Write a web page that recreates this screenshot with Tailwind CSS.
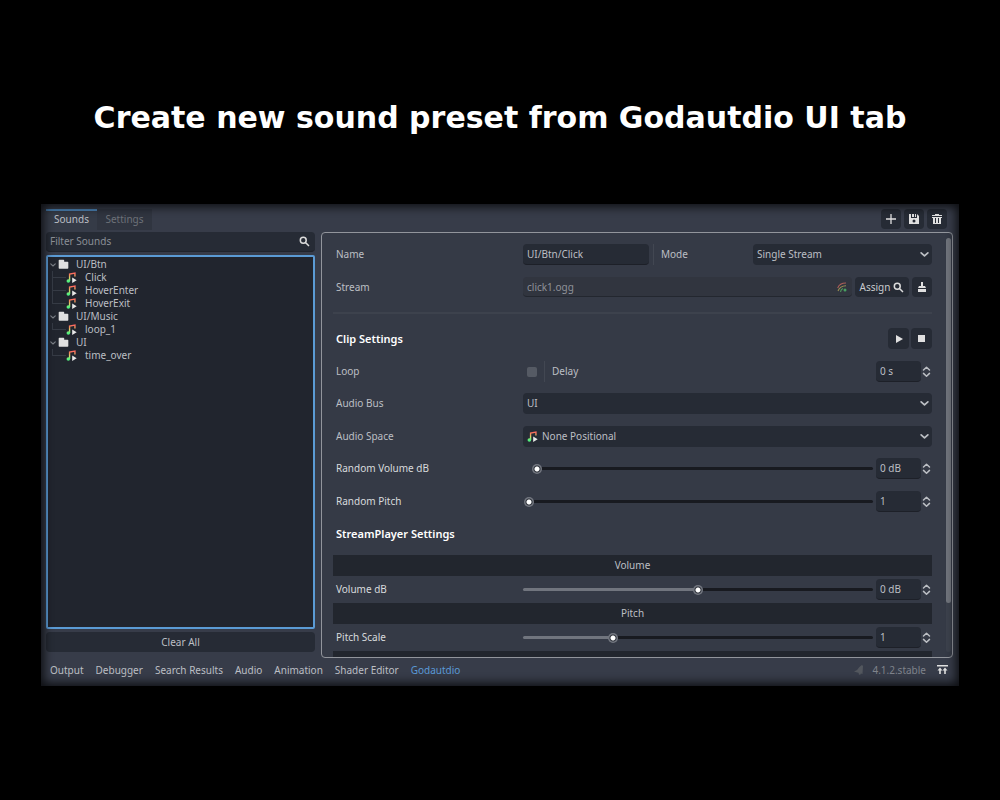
<!DOCTYPE html>
<html lang="en">
<head>
<meta charset="utf-8">
<title>Godautdio</title>
<script src="https://cdn.jsdelivr.net/npm/@tailwindcss/browser@4"></script>
</head>
<body class="bg-black min-h-screen font-['Noto_Sans',sans-serif] text-[10px] leading-[13px] text-[#bcbfc4]">
<svg class="absolute size-0" aria-hidden="true">
  <defs>
    <linearGradient id="tune" gradientUnits="userSpaceOnUse" x1="0" y1="1" x2="0" y2="15"><stop offset="0" stop-color="#ff5f5f"/><stop offset=".3" stop-color="#f0955c"/><stop offset=".55" stop-color="#d5dc6e"/><stop offset=".85" stop-color="#52f07f"/></linearGradient>
    <symbol id="note" viewBox="0 0 16 16"><path fill="none" stroke="url(#tune)" stroke-width="2" d="M5.200 13V3L13 1.600V6.500"/><circle cx="3.400" cy="13" r="2.600" fill="url(#tune)"/><path fill="#e8e8e8" d="M9 8v8l6.500-4z"/></symbol>
    <symbol id="folder" viewBox="0 0 16 16"><path fill="#e0e0e0" d="M1 2a1 1 0 0 1 1-1h6a1 1 0 0 1 1 1v2h5a1 1 0 0 1 1 1v8a1 1 0 0 1-1 1H2a1 1 0 0 1-1-1z"/></symbol>
    <symbol id="search" viewBox="0 0 16 16"><path fill="none" stroke="currentColor" stroke-width="2.200" d="M9.500 9.500 14.500 14.500M10.500 6.200a4.300 4.300 0 1 1-8.600 0 4.300 4.300 0 0 1 8.600 0z"/></symbol>
    <symbol id="chev" viewBox="0 0 8 8"><path fill="none" stroke="currentColor" stroke-width="1.500" stroke-linecap="round" stroke-linejoin="round" d="M1 2.500 4 5.300 7 2.500"/></symbol>
    <symbol id="spin" viewBox="0 0 8 12"><path fill="none" stroke="currentColor" stroke-width="1.500" stroke-linecap="round" stroke-linejoin="round" d="M1 4 4 1.200 7 4M1 7.400 4 10.200 7 7.400"/></symbol>
  </defs>
</svg>

<h1 class="pt-[98px] h-[204px] text-center font-['DejaVu_Sans',sans-serif] font-bold text-[30px] leading-10 text-white whitespace-nowrap">Create new sound preset from Godautdio UI tab</h1>

<main class="relative mx-[41px] pt-[5px] pl-[5px] pr-[6px] h-[482px] flex flex-col bg-[#373c49]">
  <header class="flex h-[23px] pr-1.5">
    <nav class="flex h-[21px]">
      <button class="w-[51px] pb-0.5 border-t-2 border-[#4b82b4] bg-[#353b47]">Sounds</button>
      <button class="w-[55px] bg-[#303540] text-[#6d7178]">Settings</button>
    </nav>
    <div class="ml-auto flex gap-[3px] text-[#e0e0e0]">
      <button aria-label="Add" class="size-5 bg-[#262b35] rounded-sm flex items-center justify-center"><svg class="size-3" viewBox="0 0 12 12"><path stroke="currentColor" stroke-width="1.300" d="M6 1v10M1 6h10"/></svg></button>
      <button aria-label="Save" class="size-5 bg-[#262b35] rounded-sm flex items-center justify-center"><svg class="size-3" viewBox="0 0 12 12"><path fill="currentColor" fill-rule="evenodd" d="M1 1h2v4h6V1l2 2v8H1zM7 1h1v3H7zM4 1h2v3H4zM6 6.500A1.500 1.500 0 1 0 6 9.500 1.500 1.500 0 1 0 6 6.500z"/></svg></button>
      <button aria-label="Delete" class="size-5 bg-[#262b35] rounded-sm flex items-center justify-center"><svg class="size-3" viewBox="0 0 12 12"><path fill="currentColor" d="M4 1h4v1h3v1H1V2h3zM1 4h10v1H1zM2 5h8v6H2z"/><path stroke="#262b35" d="M4.500 5v5M7.500 5v5"/></svg></button>
    </div>
  </header>

  <div class="flex gap-[6px] h-[426px]">
    <section class="w-[269px] flex flex-col">
      <label class="flex h-[20px] mb-[3px] items-center bg-[#262b35] pl-1 pr-[5px] rounded-sm border-b border-[#20242c]">
        <input aria-label="Filter Sounds" placeholder="Filter Sounds" class="flex-1 min-w-0 outline-none placeholder:text-[#8b8f96]">
        <svg class="size-[11px] text-[#dcdcdc]"><use href="#search"/></svg>
      </label>
      <div class="flex-1 mb-[3px] border-2 border-[#5b9bd5] rounded-xs bg-[#21252e] pt-px">
        <ul>
          <li><div class="flex h-[13px] items-center pl-0.5"><svg class="size-[6px] mr-0.5 text-[#7b7f86]"><use href="#chev"/></svg><svg class="size-[11px] mr-[7px]"><use href="#folder"/></svg>UI/Btn</div>
            <ul class="ml-1 h-[33px] border-l border-[#363b45]">
              <li class="flex h-[13px] items-center"><i class="w-[13px] h-px bg-[#363b45]"></i><svg class="size-[11px] mr-[8px]"><use href="#note"/></svg>Click</li>
              <li class="flex h-[13px] items-center"><i class="w-[13px] h-px bg-[#363b45]"></i><svg class="size-[11px] mr-[8px]"><use href="#note"/></svg>HoverEnter</li>
              <li class="flex h-[13px] items-center"><i class="w-[13px] h-px bg-[#363b45]"></i><svg class="size-[11px] mr-[8px]"><use href="#note"/></svg>HoverExit</li>
            </ul></li>
          <li class="mt-[6px]"><div class="flex h-[13px] items-center pl-0.5"><svg class="size-[6px] mr-0.5 text-[#7b7f86]"><use href="#chev"/></svg><svg class="size-[11px] mr-[7px]"><use href="#folder"/></svg>UI/Music</div>
            <ul class="ml-1 h-[7px] border-l border-[#363b45]">
              <li class="flex h-[13px] items-center"><i class="w-[13px] h-px bg-[#363b45]"></i><svg class="size-[11px] mr-[8px]"><use href="#note"/></svg>loop_1</li>
            </ul></li>
          <li class="mt-[6px]"><div class="flex h-[13px] items-center pl-0.5"><svg class="size-[6px] mr-0.5 text-[#7b7f86]"><use href="#chev"/></svg><svg class="size-[11px] mr-[7px]"><use href="#folder"/></svg>UI</div>
            <ul class="ml-1 h-[7px] border-l border-[#363b45]">
              <li class="flex h-[13px] items-center"><i class="w-[13px] h-px bg-[#363b45]"></i><svg class="size-[11px] mr-[8px]"><use href="#note"/></svg>time_over</li>
            </ul></li>
        </ul>
      </div>
      <button class="h-[20px] mb-[6px] bg-[#262b35] rounded-sm">Clear All</button>
    </section>

    <section class="flex-1 min-w-0 flex border border-[#92959c] rounded-sm bg-[#353a46] overflow-hidden">
      <div class="flex-1 min-w-0 pl-[11px] pt-[11px]">
        <div class="flex h-[21px] items-center"><label for="name" class="w-[190px] pl-[3px]">Name</label>
          <div class="flex-1 flex h-full items-center">
            <input id="name" value="UI/Btn/Click" class="w-[126px] h-full px-1 bg-[#262b35] rounded-sm border-b border-[#1d2028] outline-none">
            <i class="w-px h-full ml-[4px] mr-[7px] bg-[#424752]"></i>
            <label for="mode" class="flex-1">Mode</label>
            <div class="relative w-[179px] h-full"><select id="mode" class="appearance-none w-full h-full px-1 bg-[#262b35] rounded-sm"><option>Single Stream</option></select><svg class="absolute right-[3px] top-[6px] size-[9px] pointer-events-none"><use href="#chev"/></svg></div>
          </div></div>
        <div class="flex h-[20px] mt-3 items-center"><label for="stream" class="w-[190px] pl-[3px]">Stream</label>
          <div class="flex-1 flex h-full gap-[3px]">
            <div class="flex-1 flex items-center bg-[#31353f] border-b border-[#23272f] rounded-sm pr-[5px]"><input id="stream" readonly value="click1.ogg" class="flex-1 min-w-0 h-full px-1 text-[#8f9299] outline-none">
              <svg class="size-[10px] opacity-60" viewBox="0 0 10 10" fill="none" stroke-width="1.100"><path stroke="#ff7a6a" d="M.7 6Q2.500 1 9 1"/><path stroke="#dfce60" d="M1 9Q3 4 9 3.800"/><path stroke="#62df70" d="M3.500 9.800Q4 7 6 6.500"/><circle cx="8" cy="8" r="1.500" fill="#58e878"/></svg></div>
            <button class="w-[54px] bg-[#262b35] rounded-sm flex items-center justify-center gap-[3px] text-[#c8cacd]">Assign<svg class="size-[11px] text-[#dcdcdc]"><use href="#search"/></svg></button>
            <button aria-label="Clear stream" class="w-5 bg-[#262b35] rounded-sm flex items-center justify-center text-[#e0e0e0]"><svg class="size-[10px]" viewBox="0 0 10 10" fill="currentColor"><path d="M4 0h2v4h2l1 2H1l1-2h2zM1 7h8v3H1z"/></svg></button>
          </div></div>
        <hr class="mt-[15px] h-0.5 border-0 bg-[#3d424d]">
        <div class="flex h-[21px] mt-[14px] items-center text-[#e0e0e0]"><h2 class="flex-1 pl-[3px] text-[11px] font-semibold text-white">Clip Settings</h2>
          <button aria-label="Play" class="size-[21px] mr-[2px] bg-[#262b35] rounded-sm flex items-center justify-center"><svg class="size-2" viewBox="0 0 8 8"><path fill="currentColor" d="M1 0 8 4 1 8z"/></svg></button>
          <button aria-label="Stop" class="size-[21px] bg-[#262b35] rounded-sm flex items-center justify-center"><svg class="size-[7px]"><rect width="7" height="7" fill="currentColor"/></svg></button></div>
        <div class="flex h-[21px] mt-3 items-center"><label for="loop" class="w-[190px] pl-[3px]">Loop</label>
          <input id="loop" type="checkbox" class="appearance-none size-[10px] ml-1 rounded-xs bg-[#555a64]">
          <i class="w-px h-full ml-[7px] mr-[7px] bg-[#424752]"></i><label for="delay" class="flex-1">Delay</label>
          <input id="delay" value="0 s" class="w-[45px] h-full px-1 bg-[#262b35] rounded-sm border-b border-[#1d2028]"><svg class="w-[11px] h-3 px-px"><use href="#spin"/></svg></div>
        <div class="flex h-[21px] mt-[11px] items-center"><label for="bus" class="w-[190px] pl-[3px]">Audio Bus</label>
          <div class="relative flex-1 h-full"><select id="bus" class="appearance-none w-full h-full px-1 bg-[#262b35] rounded-sm"><option>UI</option></select><svg class="absolute right-[3px] top-[6px] size-[9px] pointer-events-none"><use href="#chev"/></svg></div></div>
        <div class="flex h-[21px] mt-3 items-center"><label for="space" class="w-[190px] pl-[3px]">Audio Space</label>
          <div class="relative flex-1 h-full"><select id="space" class="appearance-none w-full h-full pl-[19px] bg-[#262b35] rounded-sm"><option>None Positional</option></select><svg class="absolute left-1 top-[5px] size-[11px] pointer-events-none"><use href="#note"/></svg><svg class="absolute right-[3px] top-[6px] size-[9px] pointer-events-none"><use href="#chev"/></svg></div></div>
        <div class="flex h-[21px] mt-[11px] items-center text-[#d8dadd]"><label for="rvol" class="w-[190px] pl-[3px]">Random Volume dB</label>
          <input id="rvol" type="range" min="0" max="100" value="0" class="appearance-none flex-1 min-w-0 h-[3px] ml-[9px] mr-[3px] rounded-sm bg-[#181a20] [&::-webkit-slider-thumb]:appearance-none [&::-webkit-slider-thumb]:size-[10px] [&::-webkit-slider-thumb]:rounded-full [&::-webkit-slider-thumb]:bg-[radial-gradient(circle,#ffffff_2px,#2b2f38_3px,#2b2f38_3px,#737780_4px)]">
          <input aria-label="Random Volume value" value="0 dB" class="w-[45px] h-full px-1 text-[#bcbfc4] bg-[#262b35] rounded-sm border-b border-[#1d2028]"><svg class="w-[11px] h-3 px-px text-[#bcbfc4]"><use href="#spin"/></svg></div>
        <div class="flex h-[21px] mt-3 items-center text-[#d8dadd]"><label for="rpitch" class="w-[190px] pl-[3px]">Random Pitch</label>
          <input id="rpitch" type="range" min="0" max="100" value="0" class="appearance-none flex-1 min-w-0 h-[3px] ml-px mr-[3px] rounded-sm bg-[#181a20] [&::-webkit-slider-thumb]:appearance-none [&::-webkit-slider-thumb]:size-[10px] [&::-webkit-slider-thumb]:rounded-full [&::-webkit-slider-thumb]:bg-[radial-gradient(circle,#ffffff_2px,#2b2f38_3px,#2b2f38_3px,#737780_4px)]">
          <input aria-label="Random Pitch value" value="1" class="w-[45px] h-full px-1 text-[#bcbfc4] bg-[#262b35] rounded-sm border-b border-[#1d2028]"><svg class="w-[11px] h-3 px-px text-[#bcbfc4]"><use href="#spin"/></svg></div>
        <h2 class="pl-[3px] text-[11px] leading-[44px] h-[43px] font-semibold text-white">StreamPlayer Settings</h2>
        <h3 class="h-[21px] leading-[21px] text-center bg-[#22262e]">Volume</h3>
        <div class="flex h-[21px] mt-[3px] items-center text-[#d8dadd]"><label for="vol" class="w-[190px] pl-[3px]">Volume dB</label>
          <input id="vol" type="range" min="0" max="100" value="50" style="--fill:50%" class="appearance-none flex-1 min-w-0 h-[3px] mr-[3px] rounded-sm bg-[linear-gradient(90deg,#71757e_var(--fill),#181a20_var(--fill))] [&::-webkit-slider-thumb]:appearance-none [&::-webkit-slider-thumb]:size-[10px] [&::-webkit-slider-thumb]:rounded-full [&::-webkit-slider-thumb]:bg-[radial-gradient(circle,#ffffff_2px,#2b2f38_3px,#2b2f38_3px,#737780_4px)]">
          <input aria-label="Volume value" value="0 dB" class="w-[45px] h-full px-1 text-[#bcbfc4] bg-[#262b35] rounded-sm border-b border-[#1d2028]"><svg class="w-[11px] h-3 px-px text-[#bcbfc4]"><use href="#spin"/></svg></div>
        <h3 class="h-[21px] mt-[3px] leading-[21px] text-center bg-[#22262e]">Pitch</h3>
        <div class="flex h-[21px] mt-[3px] items-center text-[#d8dadd]"><label for="pitch" class="w-[190px] pl-[3px]">Pitch Scale</label>
          <input id="pitch" type="range" min="0" max="100" value="25" style="--fill:25%" class="appearance-none flex-1 min-w-0 h-[3px] mr-[3px] rounded-sm bg-[linear-gradient(90deg,#71757e_var(--fill),#181a20_var(--fill))] [&::-webkit-slider-thumb]:appearance-none [&::-webkit-slider-thumb]:size-[10px] [&::-webkit-slider-thumb]:rounded-full [&::-webkit-slider-thumb]:bg-[radial-gradient(circle,#ffffff_2px,#2b2f38_3px,#2b2f38_3px,#737780_4px)]">
          <input aria-label="Pitch value" value="1" class="w-[45px] h-full px-1 text-[#bcbfc4] bg-[#262b35] rounded-sm border-b border-[#1d2028]"><svg class="w-[11px] h-3 px-px text-[#bcbfc4]"><use href="#spin"/></svg></div>
        <div class="h-[21px] mt-[3px] bg-[#22262e]"></div>
      </div>
      <div class="ml-[14px] mr-px my-[5px] w-[5px] bg-[#3c414c] rounded-sm"><div class="h-[365px] rounded-sm bg-[#6f737b]"></div></div>
    </section>
  </div>

  <footer class="flex h-[24px] items-center pl-1 pr-[5px] gap-[12px]">
    <button>Output</button><button>Debugger</button><button>Search Results</button><button>Audio</button><button>Animation</button><button>Shader Editor</button><button class="text-[#5a99d6]">Godautdio</button>
    <div class="ml-auto flex items-center gap-[8px]">
      <svg class="size-[10px]" viewBox="0 0 10 10"><path fill="#53575e" d="M8 0 9 1 8.500 9 7 8.500 6 10 4.500 9 5 8 0 6.500Q4 5 5 2.500 6 1 8 0z"/></svg>
      <span class="text-[#7f838b]">4.1.2.stable</span>
      <button aria-label="Expand bottom panel" class="text-[#e0e0e0] ml-[3px]"><svg class="w-[11px] h-[10px]" viewBox="0 0 11 10"><path fill="currentColor" d="M0 0h11v1.500H0zM3 2.500 5.500 5.500H3.800V9H2.200V5.500H.5zM8 2.500l2.500 3H8.800V9H7.200V5.500H5.500z"/></svg></button>
    </div>
  </footer>
  <div class="absolute inset-0 pointer-events-none shadow-[inset_0_0_10px_3px_rgba(0,0,0,0.75)]"></div>
</main>
</body>
</html>
